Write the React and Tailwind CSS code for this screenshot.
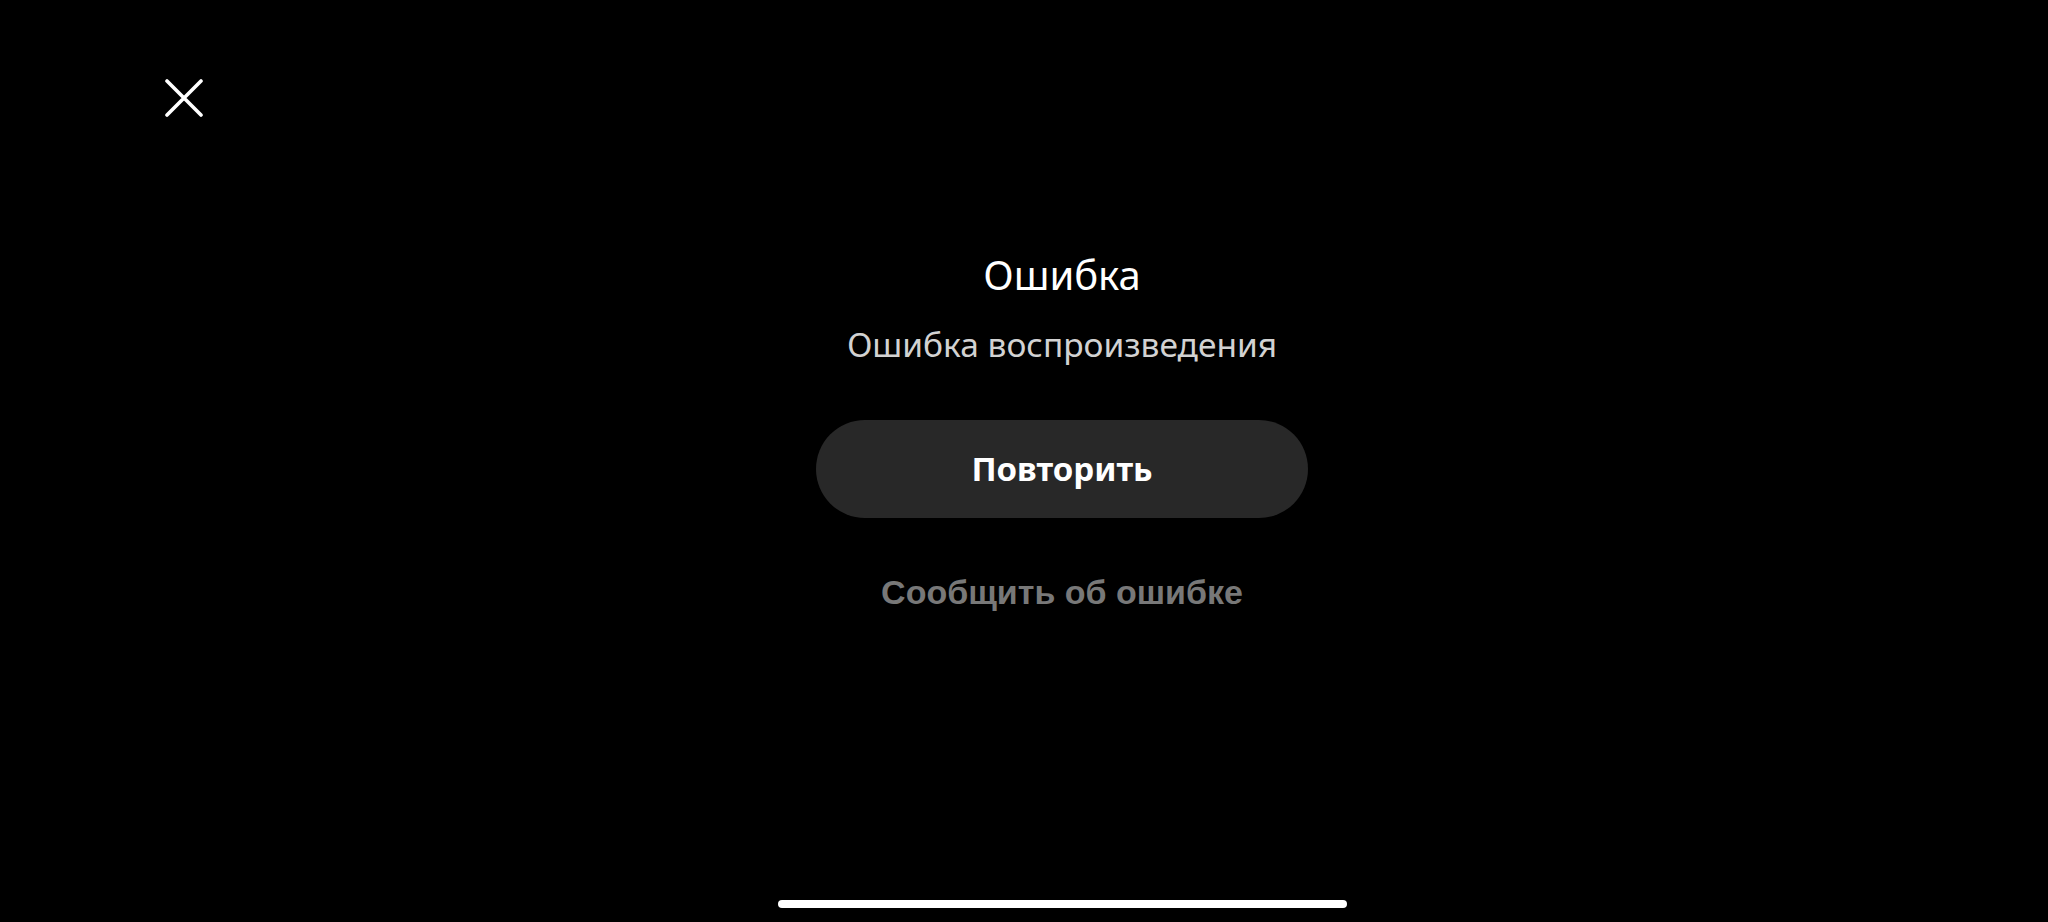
export default function App() {
  return (
    <div className="flex h-[922px] w-[2048px] flex-col bg-black" style={{ fontFamily: '"Noto Sans", "Open Sans", sans-serif' }}>
      <div className="pl-[165px] pt-[79px]">
        <button className="block h-[38px] w-[38px]" aria-label="Закрыть">
          <svg width="38" height="38" viewBox="0 0 38 38" fill="none">
            <path d="M2 2L36 36M36 2L2 36" stroke="white" strokeWidth="3.6" strokeLinecap="round" />
          </svg>
        </button>
      </div>
      <div className="mt-[134px] flex flex-col items-center pl-[76px]">
        <div className="text-[40px] leading-[48px] font-normal text-white">Ошибка</div>
        <div className="mt-[25px] text-[33.5px] leading-[40px] text-[#d2d2d2]">Ошибка воспроизведения</div>
        <button className="mt-[56px] flex h-[98px] w-[492px] items-center justify-center rounded-full bg-[#282828] text-[33px] font-bold text-white">
          Повторить
        </button>
        <button className="mt-[54px] text-[34px] leading-[40px] font-bold text-[#787878]" style={{ fontFamily: '"Liberation Sans", Arial, sans-serif' }}>
          Сообщить об ошибке
        </button>
      </div>
      <div className="mt-auto flex justify-center pb-[14px]">
        <div className="ml-[76px] h-[8px] w-[569px] rounded-full bg-white" />
      </div>
    </div>
  );
}
